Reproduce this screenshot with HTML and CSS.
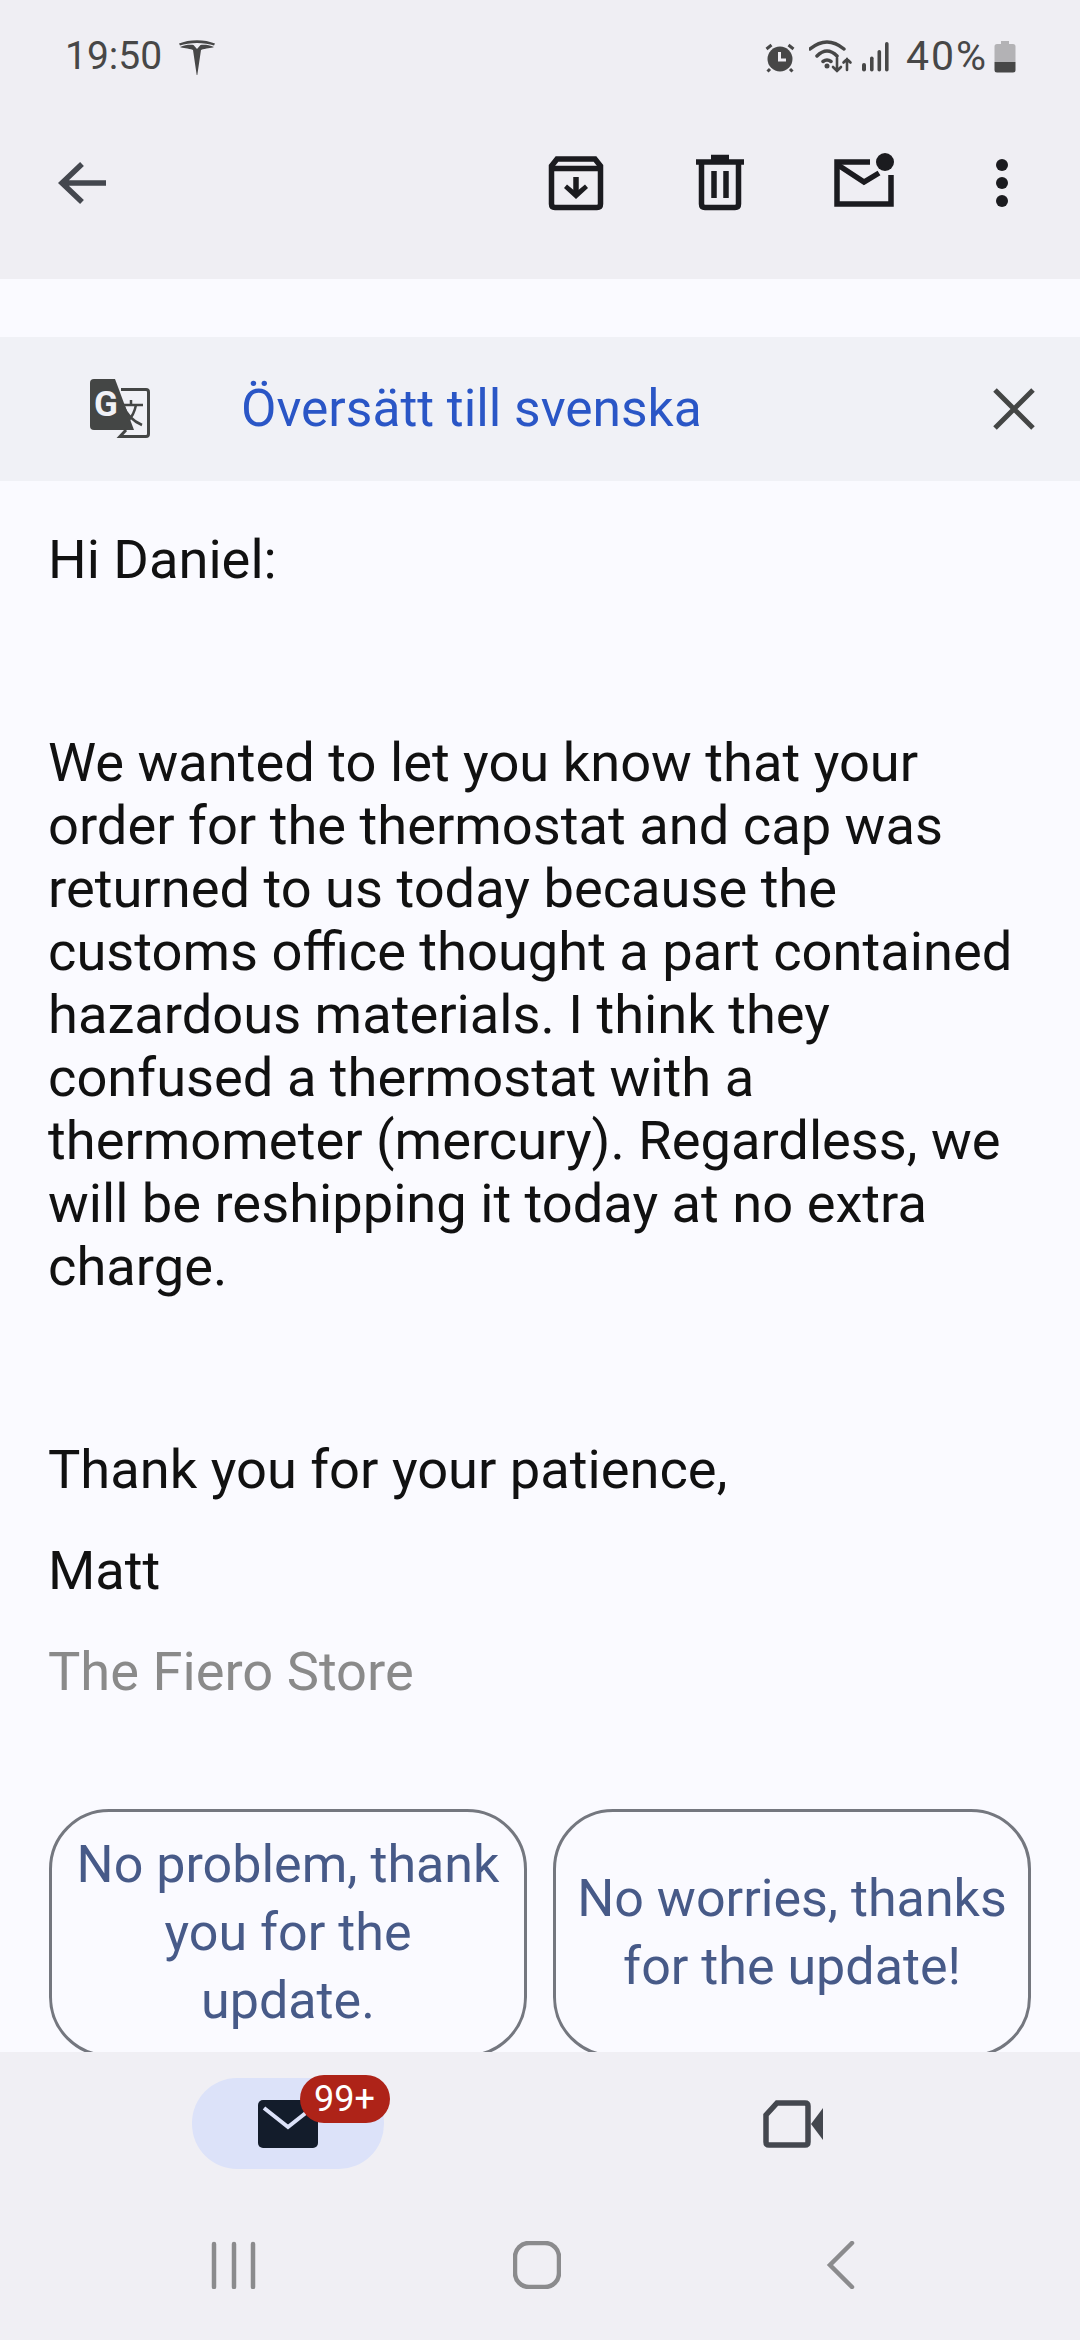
FILE: index.html
```html
<!DOCTYPE html>
<html lang="en">
<head>
    <meta charset="UTF-8">
    <meta name="viewport" content="width=device-width, initial-scale=1.0">
    <title>Gmail</title>
    <link rel="stylesheet" href="styles.css">
</head>
<body>
<div class="page">
    <header class="top">
        <div class="status">
            <span class="time">19:50</span>
            <svg class="tesla" viewBox="0 0 36 36"><path d="M0 4.500C10 0 26 0 36 4.500L35 6.500C26 3 10 3 1 6.500Z"/><path d="M1 8C6 5.500 12 5.500 14.500 6L18 10 21.500 6C24 5.500 30 5.500 35 8 32 9.500 27 9 22 11L18.300 36H17.700L14 11C9 9 4 9.500 1 8Z"/></svg>
            <div class="status-right">
                <svg class="alarm" viewBox="0 0 30 30">
                    <circle cx="15" cy="16" r="12.500"/>
                    <path class="thin" d="M1.500 6L6.500 2M28.500 6L23.500 2M5 26L2.500 28.500M25 26L27.500 28.500"/>
                    <path class="hand" d="M14.500 9V17H21"/>
                </svg>
                <svg class="wifi" viewBox="0 0 44 33">
                    <path class="arc" d="M1 9Q18-5 35 9M8 16Q18 6 28 16M14 21.500Q18 18.500 22 21.500"/>
                    <circle cx="18" cy="26" r="2.500"/>
                    <path class="arc thinner" d="M28 18V31M24 27L28 31 32 27M38 30V19M34.500 22.500L38 19 41.500 22.500"/>
                </svg>
                <svg class="signal" viewBox="0 0 28 30">
                    <rect x="0" y="21" width="4" height="8.500" rx="2"/>
                    <rect x="8" y="14.500" width="3.600" height="15" rx="1.800"/>
                    <rect x="15.500" y="8" width="3.600" height="21.500" rx="1.800"/>
                    <rect x="23" y="0" width="3.600" height="29.500" rx="1.800"/>
                </svg>
                <span class="pct">40%</span>
                <svg class="battery" viewBox="0 0 22 32">
                    <path class="bat-empty" d="M7 0H15V3H19Q21.500 3 21.500 5.500V21H0.500V5.500Q0.500 3 3 3H7Z"/>
                    <path d="M0.500 21H21.500V29Q21.500 31.500 19 31.500H3Q0.500 31.500 0.500 29Z"/>
                </svg>
            </div>
        </div>
        <div class="toolbar">
            <svg class="icon back" viewBox="0 0 60 60"><path d="M54 30H12M30 11L10 30 30 49"/></svg>
            <div class="actions">
                <svg class="icon" viewBox="0 0 60 60">
                    <path d="M11 6H49L54.500 13V51Q54.500 54.500 51 54.500H9Q5.500 54.500 5.500 51V13Z"/>
                    <path d="M6 15.500H54"/>
                    <path d="M30 24V42"/>
                    <path class="solid" d="M18 35L21 31.500 30 39 39 31.500 42 35 30 46Z"/>
                </svg>
                <svg class="icon" viewBox="0 0 60 60">
                    <path d="M6 9H54M21 4.500H39M11.500 9V51Q11.500 54.500 15 54.500H45Q48.500 54.500 48.500 51V9M24 18V45M36 18V45"/>
                </svg>
                <svg class="icon" viewBox="0 0 60 60">
                    <path d="M36 9H3V51H57V22"/>
                    <path d="M4 12L30 29 45 20"/>
                    <circle class="solid" cx="51" cy="9" r="9"/>
                </svg>
                <svg class="icon more" viewBox="0 0 48 60">
                    <circle class="solid" cx="24" cy="12" r="6"/>
                    <circle class="solid" cx="24" cy="30" r="6"/>
                    <circle class="solid" cx="24" cy="48" r="6"/>
                </svg>
            </div>
        </div>
    </header>

    <main class="mail">
        <div class="translate">
            <svg class="gt" viewBox="0 0 60 60">
                <path class="gt-dark" d="M4 0H25L44 51H4Q0 51 0 47V4Q0 0 4 0Z"/>
                <text class="gt-g" x="4" y="37">G</text>
                <path class="gt-box" d="M31 10.500H56Q58.500 10.500 58.500 13V55Q58.500 57.500 56 57.500H30L36 51"/>
                <path class="gt-zi" d="M28 26H53M41 21V26M33 26Q38 40 52 46M46 26Q44 36 38 42"/>
            </svg>
            <span class="translate-label">Översätt till svenska</span>
            <svg class="close" viewBox="0 0 42 42"><path d="M2 2L40 40M40 2L2 40"/></svg>
        </div>

        <div class="body">
            <p class="gap">Hi Daniel:</p>
            <p class="gap">We wanted to let you know that your order for the thermostat and cap was returned to us today because the customs office thought a part contained hazardous materials. I think they confused a thermostat with a thermometer (mercury). Regardless, we will be reshipping it today at no extra charge.</p>
            <p class="sig">Thank you for your patience,</p>
            <p class="sig">Matt</p>
            <p class="store">The Fiero Store</p>
        </div>

        <div class="replies">
            <div class="reply">No problem, thank<br>you for the<br>update.</div>
            <div class="reply">No worries, thanks<br>for the update!</div>
        </div>
    </main>

    <nav class="tabs">
        <div class="tab">
            <div class="pill">
                <svg class="tab-mail" viewBox="0 0 60 48">
                    <rect width="60" height="48" rx="5"/>
                    <path d="M6 8L30 27 54 8"/>
                </svg>
                <span class="badge">99+</span>
            </div>
        </div>
        <div class="tab">
            <svg class="tab-video" viewBox="0 0 60 48">
                <path class="cam" d="M14 3H42Q45 3 45 6V42Q45 45 42 45H6Q3 45 3 42V15Z"/>
                <path d="M48 24L60 8V40Z"/>
            </svg>
        </div>
    </nav>

    <div class="sysnav">
        <div class="sys"><svg viewBox="0 0 48 48"><path d="M4 3V46M24 3V46M43 3V46"/></svg></div>
        <div class="sys"><svg viewBox="0 0 48 48"><rect x="2" y="2" width="44" height="44" rx="14"/></svg></div>
        <div class="sys"><svg viewBox="0 0 48 48"><path d="M36 2L14 24 36 46"/></svg></div>
    </div>
</div>
</body>
</html>
```

FILE: styles.css
```css
*{
    margin: 0;
    padding: 0;
    box-sizing: border-box;
}
body{
    width: 1080px;
    height: 2340px;
    overflow: hidden;
    font-family: Roboto, "Noto Sans", sans-serif;
    background-color: #fafaff;
}
.page{
    display: flex;
    flex-direction: column;
    height: 2340px;
}

/* top */
.top{
    height: 279px;
    background-color: #efeef3;
}
.status{
    display: flex;
    align-items: flex-start;
    height: 110px;
    padding: 36px 64px 0 65px;
    color: #474747;
}
.time{
    font-size: 39px;
    line-height: 41px;
}
.tesla{
    width: 36px;
    height: 36px;
    margin: 3px 0 0 17px;
    fill: #474747;
}
.status-right{
    display: flex;
    align-items: flex-start;
    margin-left: auto;
}
.alarm{
    width: 30px;
    height: 30px;
    margin-top: 7px;
    fill: #474747;
}
.alarm .thin, .alarm .hand{
    fill: none;
    stroke-width: 3;
    stroke: #474747;
}
.alarm .hand{
    stroke: #efeef3;
}
.wifi{
    width: 44px;
    height: 33px;
    margin: 4px 0 0 14px;
    fill: #474747;
}
.wifi .arc{
    fill: none;
    stroke: #474747;
    stroke-width: 3.500;
    stroke-linecap: round;
}
.wifi .thinner{
    stroke-width: 2.600;
}
.signal{
    width: 28px;
    height: 30px;
    margin: 6px 0 0 9px;
    fill: #474747;
}
.pct{
    margin-left: 16px;
    font-size: 41px;
    line-height: 41px;
    letter-spacing: 2px;
}
.battery{
    width: 22px;
    height: 32px;
    margin: 5px 0 0 6px;
    fill: #474747;
}
.battery .bat-empty{
    fill: #b3b2b5;
}
.toolbar{
    display: flex;
    align-items: flex-start;
    padding: 43px 54px 0 52px;
}
.actions{
    display: flex;
    gap: 84px;
    margin-left: auto;
}
.icon{
    width: 60px;
    height: 60px;
    fill: none;
    stroke: #1b1b1f;
    stroke-width: 5.500;
}
.icon .solid{
    fill: #1b1b1f;
    stroke: none;
}
.icon.more{
    width: 48px;
}
.icon.back{
    stroke: #44474e;
}

/* mail */
.mail{
    flex: 1;
    min-height: 0;
    overflow: hidden;
}
.translate{
    display: flex;
    align-items: center;
    height: 144px;
    margin-top: 58px;
    padding: 0 45px 0 90px;
    background-color: #f0f1f6;
}
.gt{
    width: 60px;
    height: 60px;
}
.gt-dark{
    fill: #444645;
}
.gt-g{
    font-family: Roboto, sans-serif;
    font-size: 35px;
    font-weight: 700;
    fill: #f0f1f6;
}
.gt-box{
    fill: none;
    stroke: #444645;
    stroke-width: 3;
}
.gt-zi{
    fill: none;
    stroke: #444645;
    stroke-width: 2.500;
}
.translate-label{
    margin: 0 0 2px 91px;
    font-size: 51.500px;
    color: #2a56c6;
}
.close{
    width: 42px;
    height: 42px;
    margin-left: auto;
    fill: none;
    stroke: #444645;
    stroke-width: 5;
}
.body{
    padding: 47px 48px 0;
    font-size: 54.250px;
    line-height: 63px;
    color: #111;
}
.gap{
    margin-bottom: 140px;
}
.sig{
    margin-bottom: 38px;
}
.store{
    color: #8a8a8a;
}
.replies{
    display: grid;
    grid-template-columns: 478px 478px;
    gap: 26px;
    padding: 106px 49px 0;
}
.reply{
    display: flex;
    align-items: center;
    justify-content: center;
    height: 248px;
    padding: 0 8px;
    border: 3px solid #74777f;
    border-radius: 60px;
    text-align: center;
    font-size: 52px;
    line-height: 68px;
    color: #475a88;
}

/* bottom */
.tabs{
    display: flex;
    justify-content: center;
    height: 188px;
    padding-top: 26px;
    background-color: #f0eff4;
}
.tab{
    display: flex;
    justify-content: center;
    flex: 0 0 505px;
    height: 91px;
    align-items: center;
}
.pill{
    position: relative;
    display: flex;
    align-items: center;
    justify-content: center;
    width: 192px;
    height: 91px;
    border-radius: 45px;
    background-color: #dce2f9;
}
.tab-mail{
    width: 60px;
    height: 48px;
    fill: #131c2b;
}
.tab-mail path{
    fill: none;
    stroke: #dce2f9;
    stroke-width: 4;
}
.badge{
    position: absolute;
    left: 108px;
    top: -3px;
    width: 90px;
    height: 48px;
    border-radius: 24px;
    background-color: #ae2318;
    color: #fff;
    font-size: 36px;
    line-height: 48px;
    text-align: center;
}
.tab-video{
    width: 60px;
    height: 48px;
    fill: #44474e;
}
.tab-video .cam{
    fill: none;
    stroke: #44474e;
    stroke-width: 5.500;
}
.sysnav{
    display: flex;
    height: 100px;
    padding: 1px 0 0 82px;
    background-color: #f0eff4;
}
.sys{
    display: flex;
    justify-content: center;
    flex: 0 0 303px;
}
.sys svg{
    width: 48px;
    height: 48px;
    fill: none;
    stroke: #8b8b8d;
    stroke-width: 4.500;
    stroke-linecap: round;
}
```
